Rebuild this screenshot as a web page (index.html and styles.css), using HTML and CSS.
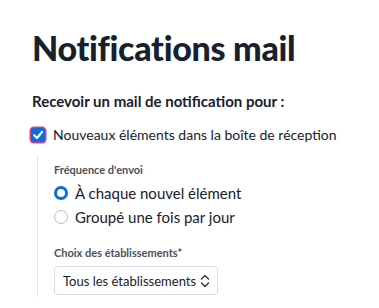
FILE: index.html
```html
<!DOCTYPE html>
<html lang="fr">
<head>
<meta charset="utf-8">
<link rel="stylesheet" href="styles.css">
</head>
<body>
<main class="page">
  <h1 class="title">Notifications mail</h1>
  <h2 class="subtitle">Recevoir un mail de notification pour :</h2>
  <label class="check-row">
    <span class="checkbox">
      <svg viewBox="0 0 14 14" width="14" height="14"><path d="M3.2 7.2 L6 10 L11 4" fill="none" stroke="#fff" stroke-width="2.2" stroke-linecap="round" stroke-linejoin="round"/></svg>
    </span>
    <span class="check-label">Nouveaux éléments dans la boîte de réception</span>
  </label>
  <div class="sub-options">
    <div class="field-label">Fréquence d'envoi</div>
    <div class="radios">
      <label class="radio-row"><span class="radio checked"></span><span>À chaque nouvel élément</span></label>
      <label class="radio-row"><span class="radio"></span><span>Groupé une fois par jour</span></label>
    </div>
    <div class="field-label second">Choix des établissements*</div>
    <div class="select">
      <span class="select-text">Tous les établissements</span>
      <svg class="chev" viewBox="0 0 10 16" width="10" height="16"><path d="M1.5 6 L5 2.5 L8.5 6 M1.5 10 L5 13.5 L8.5 10" fill="none" stroke="#2d3748" stroke-width="1.4" stroke-linecap="round" stroke-linejoin="round"/></svg>
    </div>
  </div>
</main>
</body>
</html>
```

FILE: styles.css
```css
html, body { margin: 0; padding: 0; background: #fff; }
body { font-family: Lato, "Open Sans", sans-serif; color: #1a202c; }
.page { padding: 28px 0 0 32px; }
.title {
  margin: 0;
  font-size: 34px;
  font-weight: 900;
  line-height: 40px;
  color: #17212e;
  letter-spacing: -0.3px;
}
.subtitle {
  margin: 23px 0 0 0;
  font-size: 15px;
  font-weight: 700;
  line-height: 20px;
  color: #17212e;
}
.check-row {
  display: flex;
  align-items: center;
  gap: 8px;
  margin-top: 15px;
  font-size: 14px;
  line-height: 18px;
  color: #1a202c;
}
.checkbox {
  width: 14px; height: 14px;
  border-radius: 3px;
  background: #0a6fd8;
  box-shadow: 0 0 0 1.5px #d63f8c;
  display: flex; align-items: center; justify-content: center;
  margin-left: -1px;
}
.checkbox svg { display: block; }
.sub-options {
  margin: 12px 0 0 5px;
  border-left: 1px solid #dfe3e8;
  padding: 7px 0 2px 16px;
}
.field-label {
  font-size: 11px;
  font-weight: 700;
  line-height: 14px;
  color: #4a5260;
}
.field-label.second { margin-top: 20px; }
.radios { display: flex; flex-direction: column; gap: 6px; margin-top: 7px; }
.radio-row {
  display: flex; align-items: center; gap: 7px;
  font-size: 15px; line-height: 18px; color: #1a202c;
}
.radio {
  width: 14px; height: 14px; border-radius: 50%;
  box-sizing: border-box;
  border: 1px solid #b8bec7;
  background: #fff;
}
.radio.checked { border: 3.5px solid #0a6fd8; }
.select {
  margin-top: 6px;
  width: 164px; height: 29px;
  box-sizing: border-box;
  border: 1px solid #d9dee4;
  border-radius: 3px;
  display: flex; align-items: center; justify-content: space-between;
  padding: 0 7px 0 8px;
  font-size: 13px; color: #1a202c;
}
.select-text { white-space: nowrap; }
.chev { display: block; flex-shrink: 0; }
```
